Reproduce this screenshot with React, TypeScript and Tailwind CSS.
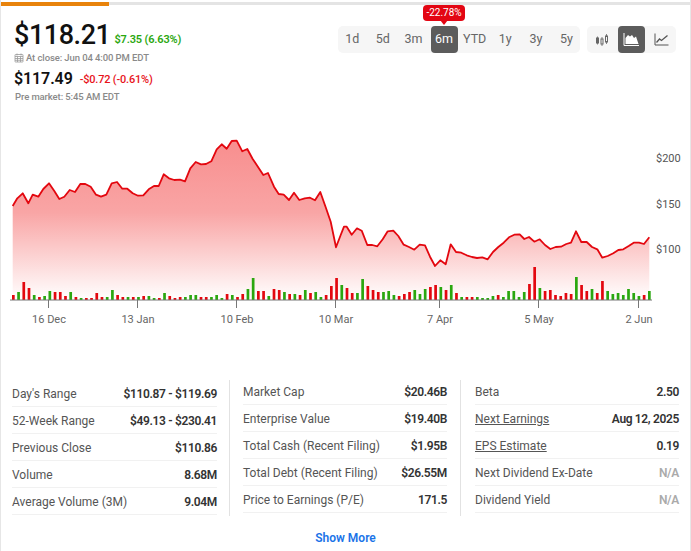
const z3 = [38,258,52,235,68,220,85,250,98,224,115,230,130,207,147,190,163,213,178,237,193,230,209,210,225,216,241,192,256,192,272,200,288,224,303,230,319,224,335,190,351,186,367,206,382,206,398,220,414,227,430,226,446,208,462,198,476,198,491,163,507,175,523,180,540,179,555,184,571,145,587,126,603,133,618,132,634,124,650,88,665,73,680,86,695,63,710,62,727,94,742,87,758,117,790,165,804,159,822,200,836,222,851,224,867,240,882,218,898,240,914,235,930,233,945,241,961,216,977,262,992,305,1008,382,1022,345];
const z4 = [-3,320,5,320,20,344,36,325,50,332,67,375,82,375,97,379,113,358,128,334,145,332,160,348,176,374,192,381,208,389,224,374,240,376,255,410,270,438,286,421,302,433,317,373,333,396,349,398,365,406,381,411,396,414,412,412,428,418,444,396,460,381,476,368,492,352,508,344,524,343,538,357,552,351,568,365,584,358,600,375,616,387,632,381,648,380,664,372,678,368,693,334,709,366,725,366,741,381,757,388,772,413,788,408,805,400,820,390,835,388,851,378,866,368,882,368,897,372,913,352];
const pts: [number, number][] = [];
for (let i = 0; i < z3.length; i += 2) pts.push([z3[i] / 3, 120 + z3[i + 1] / 3]);
for (let i = 0; i < z4.length; i += 2) pts.push([345 + z4[i] / 3, 120 + z4[i + 1] / 3]);
const line = pts.map((p, i) => `${i ? "L" : "M"}${p[0].toFixed(1)} ${p[1].toFixed(1)}`).join(" ");
const area = `${line} L${pts[pts.length - 1][0].toFixed(1)} 300 L${pts[0][0].toFixed(1)} 300 Z`;

const bars: [string, number][] = [
  ["r",5],["g",8],["r",18],["r",12],["g",5],["r",3],["g",4],["g",9],["r",8],["r",8],["r",4],["g",8],["r",3],["g",2],["r",2],["r",2],["r",7],["r",3],["g",3],["g",10],["r",5],["r",3],["g",3],["r",3],["g",3],["r",4],["g",4],["g",2],["r",2],["g",7],["r",4],["r",2],["r",3],["g",3],["g",5],["g",5],["r",3],["r",3],["g",3],["g",5],["g",2],["r",6],["g",5],["r",3],["r",6],["g",11],["g",22],["r",9],["r",9],["g",4],["r",11],["r",10],["g",8],["r",6],["g",6],["r",5],["g",10],["r",7],["g",8],["g",3],["r",5],["r",14],["r",22],["g",15],
  ["r",12],["r",7],["g",7],["g",21],["r",14],["r",10],["r",8],["g",8],["g",9],["g",5],["r",4],["r",6],["r",8],["g",10],["g",6],["g",11],["r",13],["r",15],["g",13],["r",10],["g",15],["r",7],["g",3],["r",3],["r",3],["g",3],["g",2],["g",2],["g",4],["r",5],["g",3],["g",9],["g",9],["g",3],["g",8],["r",16],["r",33],["g",12],["r",9],["r",10],["r",5],["r",4],["r",7],["r",6],["g",23],["r",15],["r",9],["g",11],["r",7],["r",19],["g",9],["g",6],["g",7],["g",5],["g",11],["g",7],["g",4],["r",5],["g",9],
];
const step = (649.3 - 13.3) / (bars.length - 1);

const ticks: [number, string][] = [[48,"16 Dec"],[137,"13 Jan"],[236,"10 Feb"],[335,"10 Mar"],[439,"7 Apr"],[538,"5 May"],[638,"2 Jun"]];
const ylabels: [number, string][] = [[162,"$200"],[208,"$150"],[253,"$100"]];
const ranges = ["1d","5d","3m","6m","YTD","1y","3y","5y"];

type Row = { l: string; v: string; link?: boolean; na?: boolean };
const col1: Row[] = [{ l: "Day's Range", v: "$110.87 - $119.69" },{ l: "52-Week Range", v: "$49.13 - $230.41" },{ l: "Previous Close", v: "$110.86" },{ l: "Volume", v: "8.68M" },{ l: "Average Volume (3M)", v: "9.04M" }];
const col2: Row[] = [{ l: "Market Cap", v: "$20.46B" },{ l: "Enterprise Value", v: "$19.40B" },{ l: "Total Cash (Recent Filing)", v: "$1.95B" },{ l: "Total Debt (Recent Filing)", v: "$26.55M" },{ l: "Price to Earnings (P/E)", v: "171.5" }];
const col3: Row[] = [{ l: "Beta", v: "2.50" },{ l: "Next Earnings", v: "Aug 12, 2025", link: true },{ l: "EPS Estimate", v: "0.19", link: true },{ l: "Next Dividend Ex-Date", v: "N/A", na: true },{ l: "Dividend Yield", v: "N/A", na: true }];

function Col({ rows, className }: { rows: Row[]; className: string }) {
  return (
    <div className={className}>
      {rows.map((r) => (
        <div key={r.l} className="flex h-[27px] items-center justify-between border-b border-[#f1f1f1] pt-[2px] leading-none">
          <span className={`text-[12px] text-[#555] ${r.link ? "underline" : ""}`}>{r.l}</span>
          <span className={`text-[12px] font-semibold tracking-[-0.35px] ${r.na ? "text-[#aaa]" : "text-[#333]"}`}>{r.v}</span>
        </div>
      ))}
    </div>
  );
}

export default function App() {
  return (
    <div className="relative h-[551px] w-[691px] overflow-hidden border-x border-[#e6e6e6] bg-white font-['Roboto',sans-serif]">
      <div className="mt-[2px] h-[3px] bg-[#e4e4e4]">
        <div className="h-[4px] w-[108px] bg-[#e8830c]" />
      </div>

      <div className="flex h-[115px] justify-between">
        <div className="pl-[13px] pt-[13px]">
          <div className="flex items-end gap-[4px]">
            <span className="text-[27px] font-medium leading-[34px] tracking-[-0.45px] text-[#111]">$118.21</span>
            <span className="pb-[5px] text-[11px] font-semibold leading-[14px] tracking-[-0.15px] text-[#2aa70f]">$7.35 (6.63%)</span>
          </div>
          <div className="flex items-center gap-[2px] text-[9.5px] font-medium leading-[12px] tracking-[-0.1px] text-[#8a8a8a]">
            <svg width="10" height="10" viewBox="0 0 10 10" fill="none" stroke="#999" strokeWidth="0.8">
              <rect x="1" y="1.5" width="8" height="7.5" rx="0.5" />
              <path d="M1 3.5H9M3 .5V2.5M7 .5V2.5M1 5.5H9M1 7.3H9M3.5 3.5V9M6.5 3.5V9" />
            </svg>
            <span>At close: Jun 04 4:00 PM EDT</span>
          </div>
          <div className="flex items-center gap-[7px] pt-[4px]">
            <span className="text-[16px] font-semibold leading-[22px] tracking-[-0.1px] text-[#111]">$117.49</span>
            <span className="pt-[1px] text-[11px] font-medium leading-[14px] tracking-[-0.2px] text-[#e8131b]">-$0.72 (-0.61%)</span>
          </div>
          <div className="pl-[1px] pt-[1px] text-[9.5px] font-medium leading-[12px] tracking-[-0.1px] text-[#8a8a8a]">Pre market: 5:45 AM EDT</div>
        </div>

        <div className="flex gap-[7px] pr-[14px] pt-[21px]">
          <div className="flex h-[27px] w-[242px] rounded-[5px] bg-[#f6f6f6]">
            {ranges.map((r) => (
              <div key={r} className="flex h-[27px] w-[30.6px] shrink-0 justify-center first:-ml-px">
                <div className={`relative flex h-[27px] w-[27px] items-center justify-center text-[12.5px] ${r === "6m" ? "rounded-[4px] bg-[#5c5c5c] text-white" : "text-[#666]"}`}>
                  {r}
                  {r === "6m" && (
                    <div className="absolute bottom-[32px] left-[-7.5px] flex h-[16px] w-[42px] items-center justify-center rounded-[4px] bg-[#e30613] text-[10px] leading-none text-white">
                      -22.78%
                      <span className="absolute bottom-[-4px] left-[17px] h-0 w-0 border-x-[4px] border-t-[5px] border-x-transparent border-t-[#e30613]" />
                    </div>
                  )}
                </div>
              </div>
            ))}
          </div>
          <div className="flex h-[27px] w-[89px] items-center justify-between rounded-[5px] bg-[#f6f6f6] px-[1px]">
            <div className="flex h-[27px] w-[27px] items-center justify-center">
              <svg width="14" height="14" viewBox="0 0 14 14" stroke="#666" fill="#666">
                <path d="M2.5 3.5V11.5M7 4V13M11.5 1V11" strokeWidth="0.8" fill="none" />
                <rect x="1.5" y="5" width="2" height="5" />
                <rect x="6" y="6" width="2" height="5" fill="#f6f6f6" />
                <rect x="10.5" y="3" width="2" height="6" fill="#f6f6f6" />
              </svg>
            </div>
            <div className="flex h-[27px] w-[27px] items-center justify-center rounded-[4px] bg-[#5c5c5c]">
              <svg width="17" height="15" viewBox="0 0 17 15" fill="none">
                <path d="M2.5 12V6L5 3L7 4.5L9 3L11 6L13 4.5L15.5 12Z" fill="#fff" />
                <path d="M1 1V13.5H16" stroke="#fff" strokeWidth="1" />
              </svg>
            </div>
            <div className="flex h-[27px] w-[27px] items-center justify-center">
              <svg width="15" height="13" viewBox="0 0 15 13" fill="none" stroke="#555">
                <path d="M1 .5V12H14.5" strokeWidth="1" />
                <path d="M2.5 9.5L5.5 6L7.5 7.5L13.5 2.5" strokeWidth="1.3" />
              </svg>
            </div>
          </div>
        </div>
      </div>

      <svg className="-ml-px block" width="691" height="210" viewBox="0 120 691 210">
        <defs>
          <linearGradient id="fill" x1="0" y1="0" x2="0" y2="1">
            <stop offset="0" stopColor="#f88e8e" />
            <stop offset="0.45" stopColor="#f9a5a5" />
            <stop offset="1" stopColor="#ffffff" />
          </linearGradient>
        </defs>
        <path d={area} fill="url(#fill)" />
        <path d={line} fill="none" stroke="#e3070f" strokeWidth="1.8" strokeLinejoin="round" />
        {bars.map(([c, h], i) => (
          <rect key={i} x={13.3 + i * step - 1.3} y={300 - h} width="2.7" height={h} fill={c === "r" ? "#e3070f" : "#2aa70f"} />
        ))}
        <path d="M10 300H652" stroke="#777" strokeWidth="1" />
        {ticks.map(([x, t]) => (
          <g key={t}>
            <path d={`M${x + 0.5} 300V308`} stroke="#777" strokeWidth="1" />
            <text x={x + 1} y="323" textAnchor="middle" fontSize="11" fill="#666" fontFamily="Roboto, sans-serif">{t}</text>
          </g>
        ))}
        {ylabels.map(([y, t]) => (
          <text key={t} x="656" y={y} fontSize="11" fill="#555" fontFamily="Roboto, sans-serif">{t}</text>
        ))}
      </svg>

      <div className="mt-[48px] flex items-start pl-[11px]">
        <Col rows={col1} className="mt-[2px] w-[205px]" />
        <div className="ml-[12px] mt-[2px] h-[136px] w-px bg-[#e2e2e2]" />
        <Col rows={col2} className="ml-[13px] w-[204px]" />
        <div className="ml-[13px] mt-[2px] h-[136px] w-px bg-[#e2e2e2]" />
        <Col rows={col3} className="ml-[14px] w-[204px]" />
      </div>
      <div className="pt-[14px] text-center text-[12px] font-semibold leading-[16px] text-[#1a73e8]">Show More</div>
    </div>
  );
}
